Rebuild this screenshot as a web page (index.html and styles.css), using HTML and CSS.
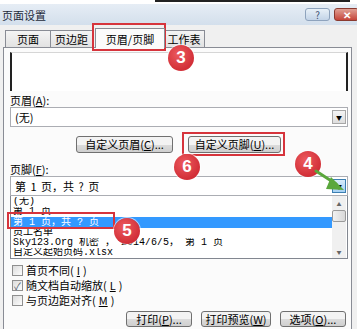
FILE: index.html
```html
<!DOCTYPE html>
<html lang="zh">
<head>
  <meta charset="UTF-8" />
  <title>页面设置</title>
  <link rel="stylesheet" href="styles.css">
</head>
<body>
  <div class="dialog">
    <div class="strip"><span></span></div>
    <div class="titlebar">
      <span class="title">页面设置</span>
      <div class="caption">
        <span class="cap help">?</span>
        <span class="cap close">✕</span>
      </div>
    </div>

    <div class="tabs">
      <span class="tab">页面</span>
      <span class="tab">页边距</span>
      <span class="tab active">页眉/页脚</span>
      <span class="tab">工作表</span>
    </div>

    <div class="panel">
      <div class="preview"></div>

      <div class="label">页眉(<u>A</u>):</div>
      <div class="select">
        <span>(无)</span>
        <span class="arrow">▼</span>
      </div>

      <div class="btn-row">
        <button class="btn wide">自定义页眉(<u>C</u>)...</button>
        <button class="btn wide">自定义页脚(<u>U</u>)...</button>
      </div>

      <div class="label">页脚(<u>F</u>):</div>
      <div class="select">
        <span>第 1 页，共 ? 页</span>
        <span class="arrow hot">▼</span>
      </div>
      <div class="listbox">
        <div class="items">
          <div class="item">(无)</div>
          <div class="item">第 1 页</div>
          <div class="item selected">第 1 页，共 ? 页</div>
          <div class="item">员工名单</div>
          <div class="item">Sky123.Org 机密 ， 2014/6/5， 第 1 页</div>
          <div class="item">自定义起始页码.xlsx</div>
        </div>
        <div class="scrollbar">
          <span class="sb-btn">▲</span>
          <span class="thumb"></span>
          <span class="sb-track"></span>
          <span class="sb-btn">▼</span>
        </div>
      </div>

      <div class="checks">
        <div class="check"><span class="box"></span>首页不同(<u>I</u>)</div>
        <div class="check"><span class="box on">✓</span>随文档自动缩放(<u>L</u>)</div>
        <div class="check"><span class="box"></span>与页边距对齐(<u>M</u>)</div>
      </div>

      <div class="actions">
        <button class="btn">打印(<u>P</u>)...</button>
        <button class="btn">打印预览(<u>W</u>)</button>
        <button class="btn">选项(<u>O</u>)...</button>
      </div>
    </div>

    <!-- annotations -->
    <span class="mark mark-tab"></span>
    <span class="mark mark-btn"></span>
    <span class="mark mark-item"></span>
    <span class="badge b3">3</span>
    <span class="badge b4">4</span>
    <span class="badge b5">5</span>
    <span class="badge b6">6</span>
    <svg class="arrow-green" width="40" height="30" viewBox="0 0 40 30">
      <path d="M2 3 L22 16" stroke="#5aa73c" stroke-width="3" fill="none" stroke-linecap="round"/>
      <path d="M17 9 L30 22 L12 21 Z" fill="#5aa73c"/>
    </svg>
  </div>
</body>
</html>
```

FILE: styles.css
```css
* {
  box-sizing: border-box;
}

body {
  margin: 0;
  font-family: "Noto Sans CJK SC", "Liberation Sans", sans-serif;
  font-size: 11px;
  color: #000;
  background: #fff;
}

u {
  text-decoration: underline;
}

.dialog {
  position: relative;
  width: 357px;
  height: 329px;
  background: #f0f0f0;
  overflow: hidden;
}

.strip {
  height: 4px;
  background: #fff;
  padding-left: 155px;
}

.strip span {
  display: block;
  width: 195px;
  height: 2px;
  border-top: 2px solid #222;
}

.titlebar {
  height: 21px;
  display: flex;
  align-items: center;
  justify-content: space-between;
  padding-left: 2px;
  background: linear-gradient(#e6edf5, #d3dfec);
}

.title {
  font-size: 11px;
  color: #1e2a3a;
}

.caption {
  display: flex;
  gap: 4px;
  align-self: flex-start;
  margin-top: 4px;
}

.cap {
  width: 25px;
  height: 13px;
  display: flex;
  align-items: center;
  justify-content: center;
  font-size: 10px;
  line-height: 1;
  border-radius: 3px;
}

.help {
  background: linear-gradient(#e8f0f8, #c3d4e7);
  border: 1px solid #8ea3bd;
  color: #3d5474;
}

.close {
  background: linear-gradient(#e0a094, #c5453a);
  border: 1px solid #8a3a30;
  color: #fff;
  font-weight: bold;
  margin-right: -2px;
}

.tabs {
  display: flex;
  align-items: flex-end;
  height: 22px;
  padding-left: 5px;
}

.tab {
  height: 17px;
  padding: 0 4px;
  display: flex;
  align-items: center;
  justify-content: center;
  white-space: nowrap;
  border: 1px solid #898c95;
  border-bottom: none;
  border-right: none;
  background: linear-gradient(#f4f4f4, #e2e2e2);
  font-size: 11px;
}

.tab:nth-child(1) {
  width: 45px;
}

.tab:nth-child(2) {
  width: 42px;
}

.tab:nth-child(4) {
  width: 42px;
  border-right: 1px solid #898c95;
}

.tab.active {
  height: 20px;
  width: 70px;
  margin: 0 -2px 0 3px;
  background: #fbfbfb;
  border-right: 1px solid #898c95;
  position: relative;
  z-index: 1;
  top: 1px;
}

.panel {
  margin-left: 3px;
  width: 349px;
  height: 290px;
  border: 1px solid #898c95;
  background: #fbfbfb;
  padding: 4px 3px 0 6px;
}

.preview {
  height: 39px;
  background: #fff;
  border-left: 2px solid #222;
  border-right: 2px solid #222;
  border-top: 1px solid #d6d6d6;
}

.label {
  margin-top: 3px;
  height: 13px;
  line-height: 13px;
}

.select {
  height: 20px;
  display: flex;
  align-items: center;
  justify-content: space-between;
  padding: 0 1px 0 4px;
  background: #fff;
  border: 1px solid #abadb3;
  word-spacing: 2px;
}

.arrow {
  width: 14px;
  height: 14px;
  display: flex;
  align-items: center;
  justify-content: center;
  font-size: 6px;
  border: 1px solid #a7a7a7;
  background: linear-gradient(#f4f4f4, #dedede);
}

.arrow.hot {
  background: linear-gradient(#d8ecfb, #a5d0f3);
  border-color: #3c7fb1;
}

.btn-row {
  display: flex;
  gap: 15px;
  padding-left: 66px;
  margin: 9px 0 10px;
}

.btn {
  height: 17px;
  padding: 0;
  font-family: inherit;
  font-size: 11px;
  line-height: 15px;
  border: 1px solid #707070;
  border-radius: 3px;
  background: linear-gradient(#f3f3f3 50%, #dcdcdc 50%, #cfcfcf);
  color: #000;
}

.btn.wide:first-child {
  width: 97px;
}

.btn.wide:last-child {
  width: 93px;
}

.listbox {
  height: 63px;
  display: flex;
  border: 1px solid #828790;
  border-top: none;
  background: #fff;
  overflow: hidden;
}

.items {
  flex: 1;
  padding-top: 1px;
}

.item {
  height: 10px;
  line-height: 10px;
  padding-left: 2px;
  white-space: nowrap;
  overflow: hidden;
  font-family: "Liberation Mono", "Noto Sans CJK SC", monospace;
  font-size: 10px;
}

.item.selected {
  height: 11px;
  line-height: 11px;
  background: #3399ff;
  color: #fff;
}

.scrollbar {
  width: 14px;
  display: flex;
  flex-direction: column;
  background: #f0f0f0;
  margin-right: 1px;
}

.sb-btn {
  height: 14px;
  font-size: 5px;
  color: #666;
  display: flex;
  align-items: center;
  justify-content: center;
}

.thumb {
  height: 12px;
  border: 1px solid #9a9a9a;
  border-radius: 2px;
  background: linear-gradient(90deg, #f2f2f2, #d8d8d8);
}

.sb-track {
  flex: 1;
}

.checks {
  margin-top: 6px;
  display: flex;
  flex-direction: column;
  gap: 4px;
  padding-left: 2px;
}

.check {
  height: 11px;
  display: flex;
  align-items: center;
  gap: 3px;
  line-height: 11px;
}

.box {
  width: 11px;
  height: 11px;
  border: 1px solid #8f8f8f;
  background: linear-gradient(135deg, #dcdcdc, #fdfdfd);
  display: flex;
  align-items: center;
  justify-content: center;
  font-size: 10px;
  color: #4a5a6a;
}

.actions {
  display: flex;
  justify-content: flex-end;
  gap: 9px;
  margin-top: 5px;
  padding-right: 2px;
}

.actions .btn {
  width: 66px;
  height: 16px;
  line-height: 14px;
}

.actions .btn:nth-child(2) {
  width: 70px;
}

.mark {
  position: absolute;
  border: 2px solid #d6343c;
}

.mark-tab {
  left: 92px;
  top: 23px;
  width: 74px;
  height: 28px;
}

.mark-btn {
  left: 182px;
  top: 132px;
  width: 103px;
  height: 24px;
}

.mark-item {
  left: 7px;
  top: 212px;
  width: 108px;
  height: 17px;
}

.badge {
  position: absolute;
  width: 26px;
  height: 26px;
  border-radius: 50%;
  background: radial-gradient(circle at 40% 35%, #ec5a5f, #d22f37 70%);
  color: #fff;
  font-family: "Liberation Sans", sans-serif;
  font-size: 17px;
  font-weight: bold;
  display: flex;
  align-items: center;
  justify-content: center;
  box-shadow: 0 0 0 1px rgba(255,255,255,0.6);
}

.b3 { left: 168px; top: 45px; }
.b4 { left: 295px; top: 151px; }
.b5 { left: 114px; top: 218px; }
.b6 { left: 174px; top: 154px; }

.arrow-green {
  position: absolute;
  left: 314px;
  top: 168px;
}
```
